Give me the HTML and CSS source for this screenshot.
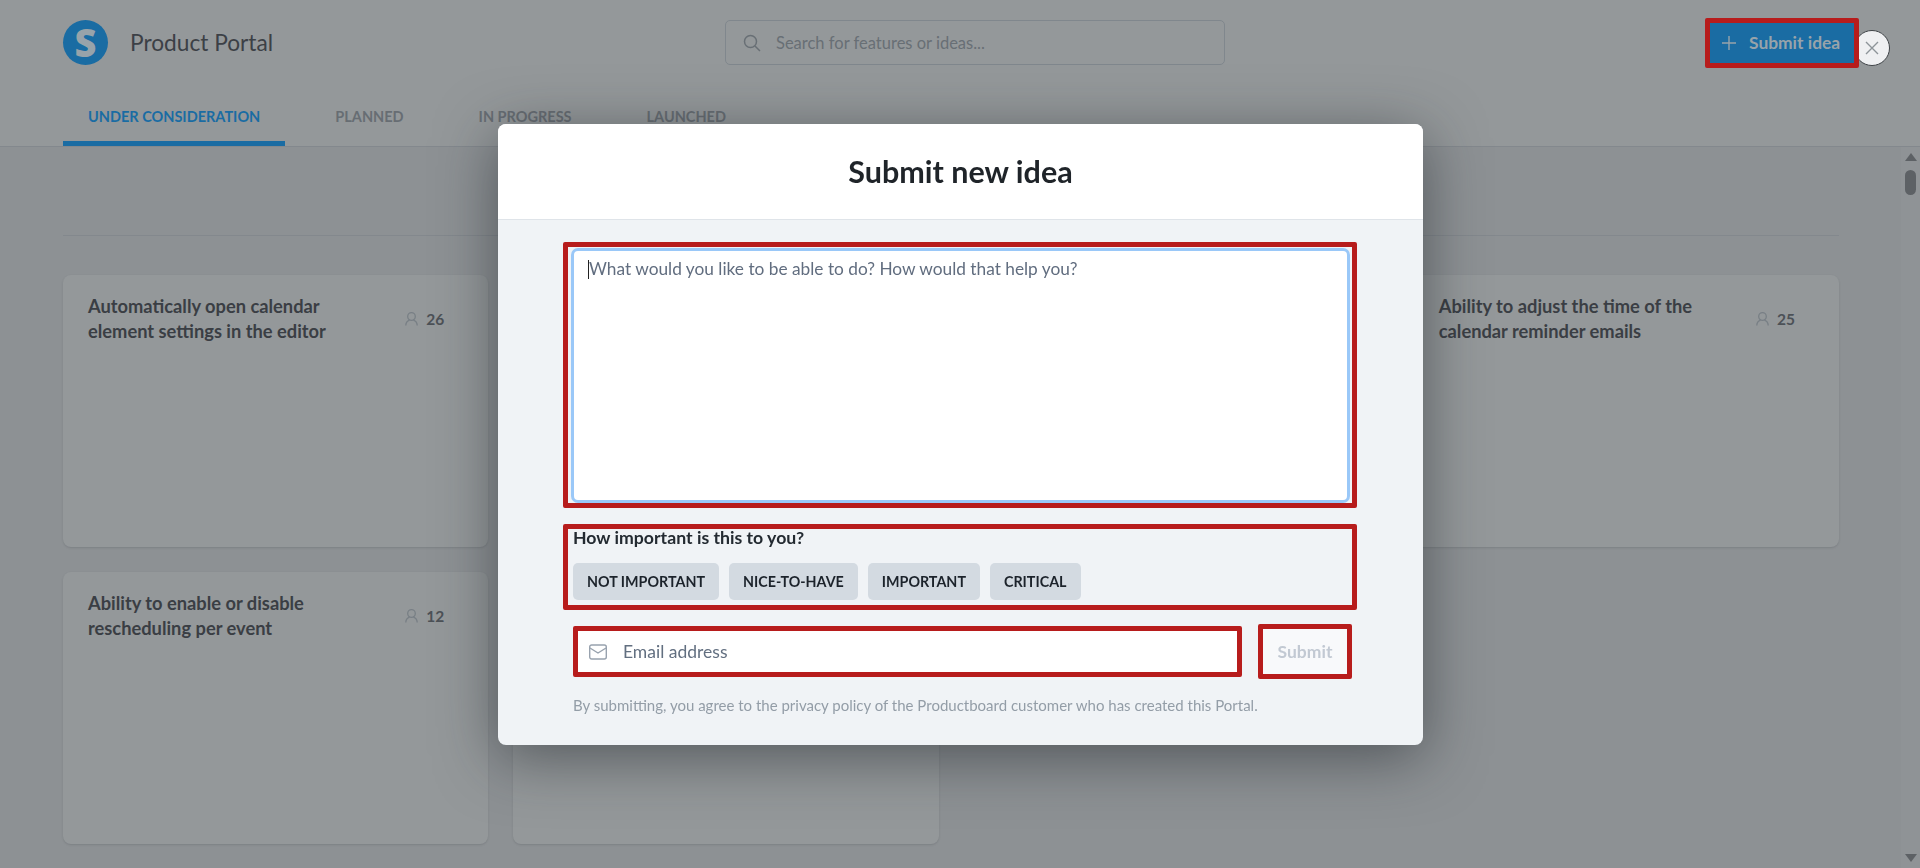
FILE: index.html
```html
<!DOCTYPE html>
<html lang="en">
<head>
  <meta charset="UTF-8">
  <title>Product Portal</title>
  <link rel="stylesheet" href="styles.css">
</head>
<body>

  <header class="topbar">
    <div class="topbar-row">
      <div class="brand">
        <span class="brand-logo">S</span>
        <span class="brand-name">Product Portal</span>
      </div>
      <div class="search">
        <svg class="search-icon" width="18" height="18" viewBox="0 0 18 18" fill="none" stroke="currentColor" stroke-width="1.5"><circle cx="7.5" cy="7.5" r="6"/><path d="M12 12l5 5"/></svg>
        <span>Search for features or ideas...</span>
      </div>
      <button class="new-idea mark">
        <svg width="14" height="14" viewBox="0 0 14 14" stroke="currentColor" stroke-width="1.4"><path d="M7 0v14M0 7h14"/></svg>
        <span>Submit idea</span>
      </button>
    </div>
    <nav class="tabs">
      <a class="tab active">UNDER CONSIDERATION</a>
      <a class="tab">PLANNED</a>
      <a class="tab">IN PROGRESS</a>
      <a class="tab">LAUNCHED</a>
    </nav>
  </header>

  <div class="page">
    <main class="board">
      <div class="board-head"></div>
      <div class="cards">
        <article class="card">
          <h3>Automatically open calendar element settings in the editor</h3>
          <div class="votes">
            <svg width="13" height="14" viewBox="0 0 13 14" fill="none" stroke="currentColor" stroke-width="1.3"><circle cx="6.500" cy="4.500" r="3.800"/><path d="M4.500 8.200C2.500 9 .8 10.200 .8 13.500M8.500 8.200c2 .8 3.700 2 3.700 5.300"/></svg>
            <b>26</b>
          </div>
        </article>
        <article class="card"></article>
        <article class="card"></article>
        <article class="card">
          <h3>Ability to adjust the time of the calendar reminder emails</h3>
          <div class="votes">
            <svg width="13" height="14" viewBox="0 0 13 14" fill="none" stroke="currentColor" stroke-width="1.3"><circle cx="6.500" cy="4.500" r="3.800"/><path d="M4.500 8.200C2.500 9 .8 10.200 .8 13.500M8.500 8.200c2 .8 3.700 2 3.700 5.300"/></svg>
            <b>25</b>
          </div>
        </article>
        <article class="card">
          <h3>Ability to enable or disable rescheduling per event</h3>
          <div class="votes">
            <svg width="13" height="14" viewBox="0 0 13 14" fill="none" stroke="currentColor" stroke-width="1.3"><circle cx="6.500" cy="4.500" r="3.800"/><path d="M4.500 8.200C2.500 9 .8 10.200 .8 13.500M8.500 8.200c2 .8 3.700 2 3.700 5.300"/></svg>
            <b>12</b>
          </div>
        </article>
        <article class="card"></article>
      </div>
    </main>
    <aside class="scrollbar">
      <span class="arrow up"></span>
      <span class="thumb"></span>
      <span class="arrow down"></span>
    </aside>
  </div>

  <!-- modal -->
  <div class="overlay">
    <section class="modal">
      <h2 class="modal-title">Submit new idea</h2>
      <div class="modal-body">
        <div class="mark idea-box">
          <div class="idea-input">
            <span class="caret"></span>
            <span>What would you like to be able to do? How would that help you?</span>
          </div>
        </div>

        <div class="mark rating">
          <p class="rating-label">How important is this to you?</p>
          <div class="chips">
            <button class="chip">NOT IMPORTANT</button>
            <button class="chip">NICE-TO-HAVE</button>
            <button class="chip">IMPORTANT</button>
            <button class="chip">CRITICAL</button>
          </div>
        </div>

        <div class="send-row">
          <div class="mark email">
            <svg width="18" height="16" viewBox="0 0 18 16" fill="none" stroke="currentColor" stroke-width="1.4"><rect x=".7" y="1" width="16.600" height="14" rx="2"/><path d="M1 4l8 5 8-5"/></svg>
            <span>Email address</span>
          </div>
          <button class="mark send">Submit</button>
        </div>

        <p class="note">By submitting, you agree to the privacy policy of the Productboard customer who has created this Portal.</p>
      </div>
    </section>
  </div>

  <button class="close">
    <svg width="14" height="14" viewBox="0 0 14 14" stroke="currentColor" stroke-width="1.4"><path d="M1 1l12 12M13 1L1 13"/></svg>
  </button>

</body>
</html>
```

FILE: styles.css
```css
:root{
  --page:#8d9194;
  --panel:#94989a;
  --line:#83888d;
  --blue:#1a6ca3;
  --ink:#3a3e44;
  --red:#b71c1c;
}
*{box-sizing:border-box;margin:0;padding:0}
body{
  height:868px;
  display:flex;
  flex-direction:column;
  overflow:hidden;
  background:var(--page);
  font-family:Lato,"Open Sans",sans-serif;
  color:var(--ink);
}
button{font-family:inherit;border:none;cursor:pointer}
/* annotation frame */
.mark{
  border:5px solid var(--red);
  border-radius:2px;
}
/* header */
.topbar{
  height:147px;
  background:var(--panel);
  border-bottom:1px solid var(--line);
}
.topbar-row{
  height:86px;
  display:grid;
  grid-template-columns:662px 500px 1fr;
  align-items:center;
  padding:0 61px 1px 63px;
}
.brand{display:flex;align-items:center;gap:22px}
.brand-logo{
  width:45px;height:45px;
  border-radius:50%;
  background:var(--blue);
  color:#98a3aa;
  font-family:"Open Sans",sans-serif;
  font-size:38px;
  font-weight:800;
  line-height:45px;
  text-align:center;
}
.brand-name{font-size:22.700px;color:#3c4046}
.search{
  height:45px;
  display:flex;
  align-items:center;
  gap:15px;
  padding-left:17px;
  border:1px solid #80878d;
  border-radius:5px;
  font-size:16.500px;
  color:#686f75;
}
.search-icon{flex:none}
.new-idea{
  justify-self:end;
  width:154px;height:50px;
  display:flex;
  align-items:center;
  gap:13px;
  padding-left:12px;
  background:var(--blue);
  color:#98a3aa;
  font-size:17.400px;
  font-weight:700;
}
.tabs{display:flex;gap:25px;padding-left:63px;height:60px}
.tab{
  padding:22px 25px 0;
  font-size:14.500px;
  font-weight:700;
  line-height:18px;
  color:#676d73;
}
.tab.active{color:var(--blue);border-bottom:5px solid var(--blue)}
/* board */
.page{flex:1;display:flex;min-height:0}
.board{flex:1;padding-left:63px}
.board-head{width:1776px;height:89px;border-bottom:1px solid var(--line)}
.cards{
  width:1776px;
  margin-top:39px;
  display:grid;
  grid-template-columns:repeat(4,1fr);
  grid-auto-rows:272px;
  gap:25px;
}
.card{
  display:flex;
  justify-content:space-between;
  padding:19px 44px 0 25px;
  background:var(--panel);
  border-radius:8px;
  box-shadow:0 1px 2px rgba(60,65,70,.2);
}
.card h3{width:290px;font-size:18.300px;font-weight:700;line-height:25px}
.votes{
  display:flex;
  align-items:center;
  gap:8px;
  height:18px;
  margin-top:16px;
  font-size:15.500px;
  color:#4c5157;
}
.votes svg{color:#787f85}
.scrollbar{
  width:19px;
  display:flex;
  flex-direction:column;
  align-items:center;
  padding:6px 0;
  background:#8f9396;
}
.arrow{width:0;height:0;border:6px solid transparent;border-top:0;border-bottom:8px solid #5d6165}
.arrow.down{margin-top:auto;transform:rotate(180deg)}
.thumb{width:11px;height:25px;margin-top:9px;border-radius:6px;background:#5d6165}
/* modal */
.overlay{
  position:fixed;
  inset:0;
  display:flex;
  justify-content:center;
  padding:124px 0 0 1px;
}
.modal{
  width:925px;
  height:621px;
  display:flex;
  flex-direction:column;
  border-radius:8px;
  overflow:hidden;
  background:#f0f3f6;
  box-shadow:0 12px 60px rgba(30,35,40,.55);
}
.modal-title{
  flex:none;
  height:96px;
  background:#fff;
  border-bottom:1px solid #dfe4e9;
  font-size:30.500px;
  font-weight:700;
  line-height:94px;
  text-align:center;
  color:#1f2429;
}
.modal-body{padding:22px 66px 0 65px}
.idea-box{height:266px;padding:1px 2px 0 3px}
.idea-input{
  height:255px;
  display:flex;
  padding:8px 14px;
  background:#fff;
  border:3px solid #9ac8f8;
  border-radius:7px;
  font-size:17.300px;
  line-height:20px;
  color:#616d7f;
}
.caret{width:1px;height:19px;margin-top:1px;background:#222}
.rating{height:86px;margin-top:16px;padding:0 5px}
.rating-label{font-size:17.700px;font-weight:700;line-height:18px;color:#232a31}
.chips{display:flex;gap:10px;margin-top:16px}
.chip{
  height:37px;
  padding:0 14px;
  background:#d3dae1;
  border-radius:5px;
  font-size:14.300px;
  font-weight:700;
  color:#1c232b;
}
.send-row{display:flex;align-items:center;margin-top:14px;padding:0 5px 0 10px}
.email{
  width:669px;height:51px;
  display:flex;
  align-items:center;
  gap:16px;
  padding-left:11px;
  background:#fff;
  font-size:17.500px;
  color:#626f80;
}
.email svg{color:#98a2ae}
.send{
  width:94px;height:55px;
  margin-left:16px;
  background:#f8f9fb;
  font-size:17.500px;
  font-weight:700;
  color:#c2c9d3;
}
.note{
  margin:17px 0 0 10px;
  font-size:15px;
  line-height:18px;
  color:#939da7;
}
/* close button */
.close{
  position:fixed;
  top:30px;
  left:1854px;
  width:36px;height:36px;
  display:flex;
  align-items:center;
  justify-content:center;
  border:1px solid #3f4347;
  border-radius:50%;
  background:#eff0f2;
  color:#8d9499;
}
.new-idea{position:relative;z-index:3}
```
